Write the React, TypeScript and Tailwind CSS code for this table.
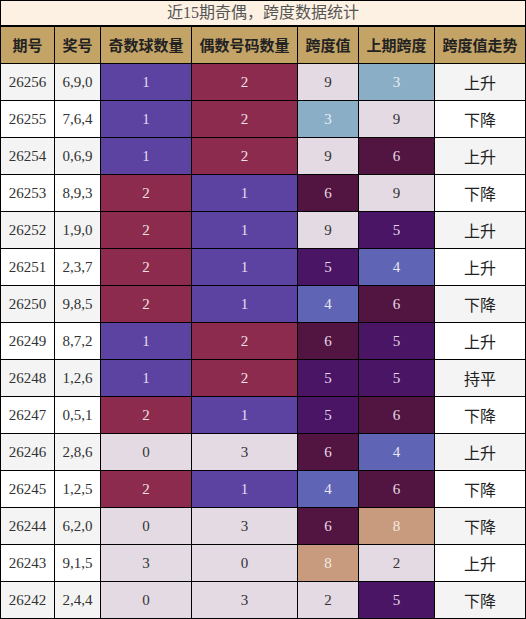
const rows: [string, string, number, number, number, number, string][] = [
  ['26256', '6,9,0', 1, 2, 9, 3, '上升'],
  ['26255', '7,6,4', 1, 2, 3, 9, '下降'],
  ['26254', '0,6,9', 1, 2, 9, 6, '上升'],
  ['26253', '8,9,3', 2, 1, 6, 9, '下降'],
  ['26252', '1,9,0', 2, 1, 9, 5, '上升'],
  ['26251', '2,3,7', 2, 1, 5, 4, '上升'],
  ['26250', '9,8,5', 2, 1, 4, 6, '下降'],
  ['26249', '8,7,2', 1, 2, 6, 5, '上升'],
  ['26248', '1,2,6', 1, 2, 5, 5, '持平'],
  ['26247', '0,5,1', 2, 1, 5, 6, '下降'],
  ['26246', '2,8,6', 0, 3, 6, 4, '上升'],
  ['26245', '1,2,5', 2, 1, 4, 6, '下降'],
  ['26244', '6,2,0', 0, 3, 6, 8, '下降'],
  ['26243', '9,1,5', 3, 0, 8, 2, '上升'],
  ['26242', '2,4,4', 0, 3, 2, 5, '下降'],
];

const countColor: Record<number, string> = {
  1: 'bg-[#5c42a1] text-[#e4def0]',
  2: 'bg-[#8c2b4d] text-[#eee2e6]',
  0: 'bg-[#e3dae3] text-[#333]',
  3: 'bg-[#e3dae3] text-[#333]',
};

const spanColor: Record<number, string> = {
  2: 'bg-[#e3dae3] text-[#333]',
  9: 'bg-[#e3dae3] text-[#333]',
  3: 'bg-[#8aaec6] text-[#e6eef3]',
  4: 'bg-[#6064b5] text-[#e6e6f4]',
  5: 'bg-[#4b1566] text-[#e2d8e8]',
  6: 'bg-[#521542] text-[#e6dae2]',
  8: 'bg-[#c89b7e] text-[#f4ebe4]',
};

const widths = ['w-[54px]', 'w-[46px]', 'w-[91px]', 'w-[106px]', 'w-[61px]', 'w-[76px]', 'w-[91px]'];
const headers = ['期号', '奖号', '奇数球数量', '偶数号码数量', '跨度值', '上期跨度', '跨度值走势'];

const cell = 'h-[37px] shrink-0 flex items-center justify-center border-r border-b border-black';

export default function App() {
  return (
    <div className="w-[526px] font-['Liberation_Serif','Noto_Sans_CJK_SC',serif] text-[15px] text-[#333]">
      <div className="h-[26px] border border-black bg-[#fdf1e3] flex items-center justify-center text-[16px] text-[#555]">
        近15期奇偶，跨度数据统计
      </div>
      <div className="border-l border-t border-black">
        <div className="flex bg-[#c4a466]">
          {headers.map((h, i) => (
            <div key={h} className={`${cell} ${widths[i]} font-['Noto_Sans_CJK_SC',sans-serif] font-bold text-[15px] text-[#222]`}>
              {h}
            </div>
          ))}
        </div>
        {rows.map((r, idx) => {
          const plain = idx % 2 === 0 ? 'bg-[#f4f4f4]' : 'bg-white';
          return (
            <div key={r[0]} className="flex">
              <div className={`${cell} ${widths[0]} ${plain}`}>{r[0]}</div>
              <div className={`${cell} ${widths[1]} ${plain}`}>{r[1]}</div>
              <div className={`${cell} ${widths[2]} ${countColor[r[2]]}`}>{r[2]}</div>
              <div className={`${cell} ${widths[3]} ${countColor[r[3]]}`}>{r[3]}</div>
              <div className={`${cell} ${widths[4]} ${spanColor[r[4]]}`}>{r[4]}</div>
              <div className={`${cell} ${widths[5]} ${spanColor[r[5]]}`}>{r[5]}</div>
              <div className={`${cell} ${widths[6]} ${plain} font-['Noto_Sans_CJK_SC',sans-serif] text-[16px] text-[#222]`}>
                {r[6]}
              </div>
            </div>
          );
        })}
      </div>
    </div>
  );
}
